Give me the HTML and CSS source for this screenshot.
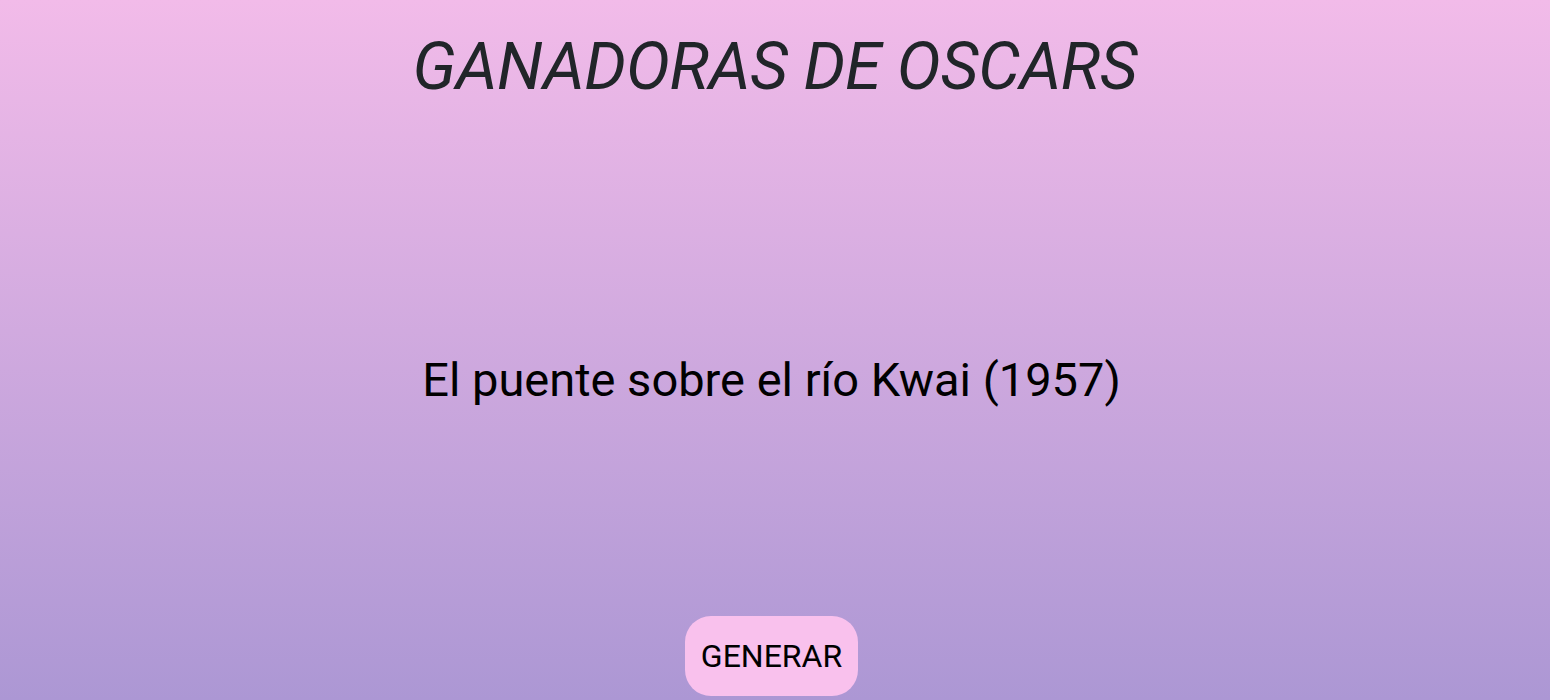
FILE: index.html
```html
<!DOCTYPE html>
<html lang="es">
<head>
<meta charset="utf-8">
<title>Ganadoras de Oscars</title>
<link rel="stylesheet" href="styles.css">
</head>
<body>
<main class="page">
  <h1 class="title">GANADORAS DE OSCARS</h1>
  <p class="movie">El puente sobre el río Kwai (1957)</p>
  <button class="generate" type="button">GENERAR</button>
</main>
</body>
</html>
```
FILE: styles.css
```css
html, body {
  margin: 0;
  padding: 0;
}
body {
  min-height: 100vh;
  background: linear-gradient(to bottom, #f2bbe9 0%, #ac97d4 100%);
  font-family: Roboto, "Noto Sans", "Liberation Sans", sans-serif;
}
.page {
  height: 100vh;
  display: flex;
  flex-direction: column;
  align-items: center;
  box-sizing: border-box;
  padding: 27px 0 4px;
}
.title {
  margin: 0;
  font-size: 66px;
  line-height: 1.2;
  font-style: italic;
  font-weight: 400;
  letter-spacing: -0.4px;
  color: #212529;
}
.movie {
  margin: 246px 7px 0 0;
  font-size: 47px;
  line-height: 1.2;
  font-weight: 400;
  color: #000;
}
.generate {
  margin: auto 7px 0 0;
  font-family: inherit;
  font-size: 32px;
  line-height: 38px;
  padding: 21px 16px;
  border: none;
  border-radius: 26px;
  background: #f9c1ed;
  color: #000;
}
```
